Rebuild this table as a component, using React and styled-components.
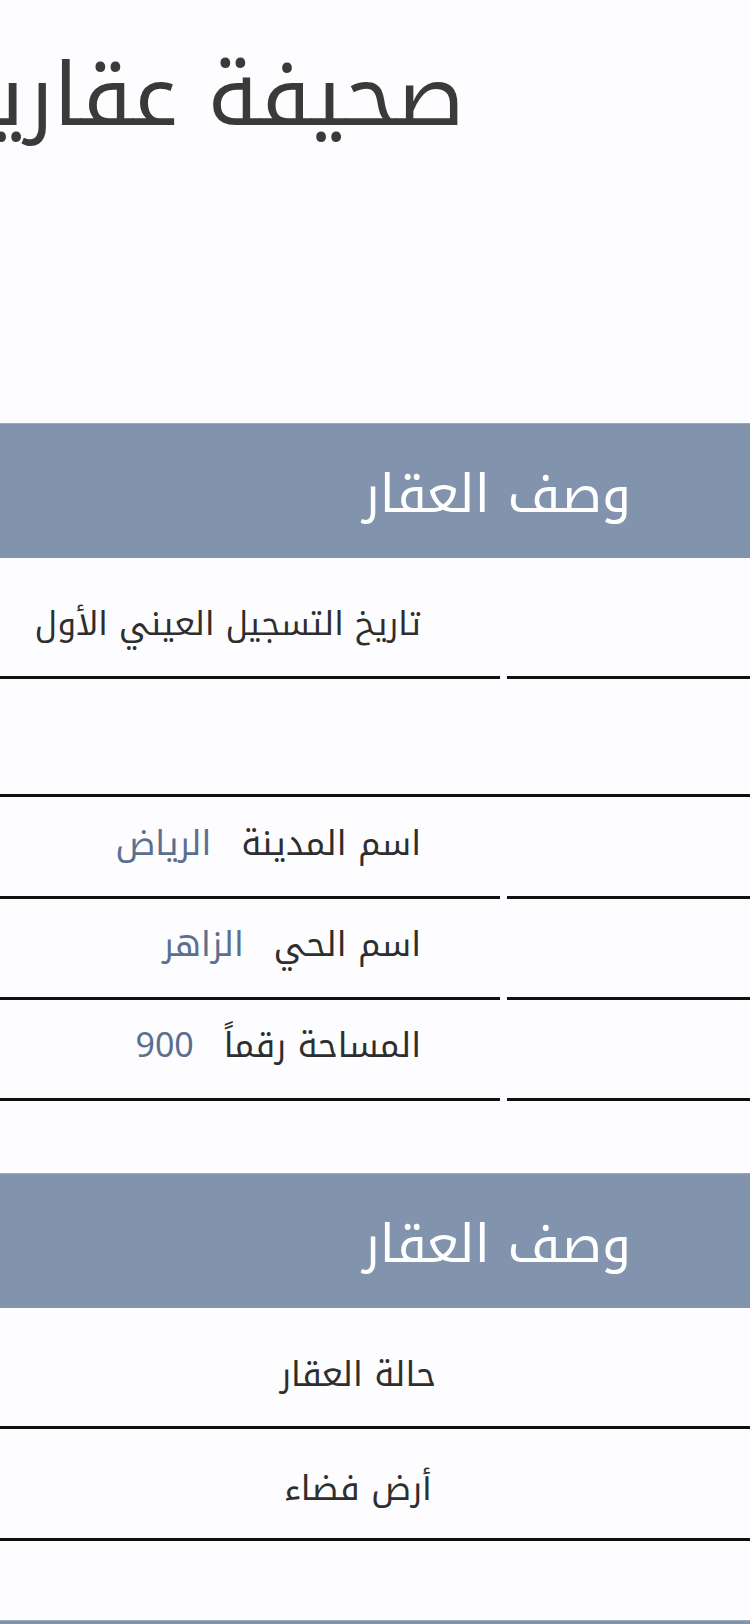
import React from "react";
import styled, { createGlobalStyle } from "styled-components";

const arabic = `"Noto Kufi Arabic", "Noto Sans Arabic", "DejaVu Sans", sans-serif`;

const Global = createGlobalStyle`
  html, body { margin: 0; padding: 0; background: #fdfdff; }
  body { overflow: hidden; font-family: ${arabic}; }
`;

const Page = styled.div`
  width: 750px;
  height: 1624px;
  overflow: hidden;
  background: #fdfdff;
  display: flex;
  flex-direction: column;
`;

const TitleArea = styled.header`
  height: 423px;
  flex-shrink: 0;
  box-sizing: border-box;
  padding: 44px 286px 0 0;
  direction: rtl;
  white-space: nowrap;
  overflow: hidden;
`;

const Title = styled.h1`
  margin: 0;
  font-family: ${arabic};
  font-weight: 400;
  font-size: 87px;
  line-height: 1.2;
  color: #3a3a3a;
`;

const Band = styled.div`
  height: 135px;
  flex-shrink: 0;
  box-sizing: border-box;
  background: #8294ad;
  border-top: 1px solid #9aa9bb;
  direction: rtl;
  display: flex;
  align-items: center;
  padding: 6px 119px 0 0;
  color: #ffffff;
  font-family: ${arabic};
  font-size: 52px;
  font-weight: 400;
`;

const SplitRow = styled.div`
  display: grid;
  flex-shrink: 0;
  grid-template-columns: 500px 1fr;
  column-gap: 7px;
  height: ${(p) => p.$h}px;
`;

const Cell = styled.div`
  box-sizing: border-box;
  border-bottom: 3px solid #111;
  display: flex;
  align-items: flex-end;
  direction: rtl;
  justify-content: flex-start;
  padding: 0 79px 30px 0;
`;

const FullRow = styled.div`
  box-sizing: border-box;
  flex-shrink: 0;
  height: ${(p) => p.$h}px;
  border-bottom: 3px solid #111;
  display: flex;
  align-items: flex-end;
  justify-content: center;
  padding: 0 34px ${(p) => p.$pb || 30}px 0;
  direction: rtl;
`;

const Spacer = styled.div`
  height: ${(p) => p.$h}px;
  flex-shrink: 0;
`;

const Field = styled.div`
  display: flex;
  align-items: baseline;
  gap: 30px;
  font-family: ${arabic};
  font-size: ${(p) => p.$size || 34}px;
  line-height: 1.3;
  white-space: nowrap;
`;

const Label = styled.span`
  color: #2e2e2e;
`;

const Value = styled.span`
  color: #5b6f8e;
`;

const fields = [
  { label: "اسم المدينة", value: "الرياض" },
  { label: "اسم الحي", value: "الزاهر" },
  { label: "المساحة رقماً", value: "900" },
];

export default function App() {
  return (
    <>
      <Global />
      <Page>
        <TitleArea>
          <Title>صحيفة عقارية</Title>
        </TitleArea>

        <Band>وصف العقار</Band>

        <SplitRow $h={121}>
          <Cell>
            <Field $size={33}>
              <Label>تاريخ التسجيل العيني الأول</Label>
            </Field>
          </Cell>
          <Cell />
        </SplitRow>
        <FullRow $h={118} />
        {fields.map((f, i) => (
          <SplitRow key={f.label} $h={i === 0 ? 102 : 101}>
            <Cell>
              <Field>
                <Label>{f.label}</Label>
                <Value>{f.value}</Value>
              </Field>
            </Cell>
            <Cell />
          </SplitRow>
        ))}
        <Spacer $h={72} />

        <Band>وصف العقار</Band>

        <FullRow $h={121} $pb={29}>
          <Field>
            <Label>حالة العقار</Label>
          </Field>
        </FullRow>
        <FullRow $h={112} $pb={27}>
          <Field>
            <Label>أرض فضاء</Label>
          </Field>
        </FullRow>
        <Spacer $h={79} />
        <Band />
      </Page>
    </>
  );
}
